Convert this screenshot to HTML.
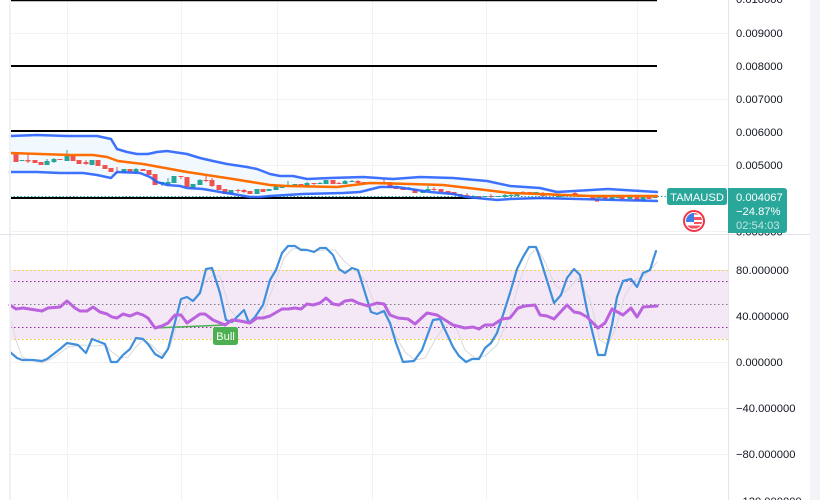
<!DOCTYPE html>
<html><head><meta charset="utf-8"><style>
html,body{margin:0;padding:0;background:#fff;width:820px;height:500px;overflow:hidden}
svg{display:block}
text{font-family:"Liberation Sans",sans-serif;font-size:11.2px;fill:#131722}
</style></head><body>
<svg width="820" height="500" viewBox="0 0 820 500" xmlns="http://www.w3.org/2000/svg">
<rect width="820" height="500" fill="#fff"/>
<!-- grid -->
<g stroke="#f1f2f6" stroke-width="1" fill="none">
<path d="M10 33.5H728M10 99.5H728M10 165.5H728M10 316.5H728M10 362.5H728M10 408.5H728M10 454.5H728"/>
<path d="M67.5 0V500M181.5 0V500M277.5 0V500M372.5 0V500M486.5 0V500M637.5 0V500"/>
</g>
<!-- RSI bands -->
<rect x="10" y="270" width="718" height="69" fill="#f3e5f5" fill-opacity=".9"/>
<g stroke="#f1e8f3" fill="none"><path d="M10 316.5H728"/></g>
<g fill="none" stroke-width="1" stroke-dasharray="1.5 2.5">
<path d="M10 270.5H728M10 339.5H728" stroke="#f0c419"/>
<path d="M10 281.5H728M10 327.5H728" stroke="#8e2a9e"/>
<path d="M10 304.5H728" stroke="#787b86"/>
</g>
<!-- black levels -->
<g stroke="#000" fill="none">
<path d="M10 0.5H657" stroke-width="1.5"/>
<path d="M10 66H657M10 131H657M10 198H657" stroke-width="2"/>
</g>
<!-- BB fill -->
<path fill="#f1f8fe" d="M10 136L37 135 67 136 97 136 111 139 117 149 127 152 137 154 148 154 157 152 167 151 187 154 200 158 213 161 227 164 247 167 257 169 270 174 280 176 293 176 307 179 330 178 363 177 393 179 420 177 453 178 487 181 510 186 540 188 557 192 608 189 657 192V201L540 198 510 199 497 200 467 197 453 194 430 192 397 187 380 187 360 192 343 193 303 194 270 196 260 197 250 197 233 194 220 192 203 189 187 188 180 186 167 185 157 182 150 177 140 173 117 172 111 178 97 175 83 173 60 173 37 172 10 172Z"/>
<!-- candles -->
<g fill="none" stroke-width="1" stroke="#ef5350">
<path d="M28 154V163M86 160V165M117 167V173M181 176V179M206 176V182M212 178V187M238 189V193M244 189V193M314 183V185M339 182V184M358 180V184M364 182V185M384 179V184M434 187V191M467 193V197M491 194V198M523 191V194M543 192V197M575 192V196M622 195V200"/>
</g>
<g fill="none" stroke-width="1" stroke="#26a69a">
<path d="M47 159V165M54 158V163M67 150V161M136 168V173M162 182V186M168 178V185M200 179V185M288 181V186M307 182V187M320 182V184M345 180V184M352 180V182M409 187V190M428 186V191M473 195V198M505 194V198M511 194V198"/>
</g>
<g fill="none" stroke-width="5" stroke="#ef5350">
<path d="M16 154V162M28 160V161.5M35 160V163M41 162V165M60 159V160M73 154V161M79 160V164M86 162V164M98 160V166M105 165V169M111 168V172M117 172V173M130 169V172M143 169V171M149 170V175M155 174V185M181 176V177M187 177V187M206 180V181M212 180V186M219 185V190M225 189V194M238 190V191M244 190V192M250 191V194M263 189V192M301 184V187M314 183V184M333 180V184M339 183V184M358 181V183M364 182V183M372 183V184M384 182V183M396 187V189M403 188V190M415 189V193M434 189V190M441 189V192M448 191V194M454 192V195M460 194V196M467 195V196M479 196V198M491 196V197M523 192V193M530 192V193M543 193V196M549 193V195M555 194V196M567 194V196M575 193V195M581 195V197M593 197V200M605 197V199M622 197V199M637 197V201M649 197V199"/>
<path d="M390 182V188" stroke-width="5"/>
</g>
<g fill="none" stroke-width="5" stroke="#26a69a">
<path d="M22 160V161M47 161V165M54 159V162M67 155V161M92 160V165M124 169V173M136 169V172M162 182V184M168 182V184M174 176V183M193 184V188M200 180V185M231 190V194M257 189V194M269 189V191M276 186V190M282 185V188M288 185V186M295 184V185M307 183V187M320 183V184M326 180V184M345 181V184M352 181V182M377 182V184M409 188V189M423 190V193M428 189V191M473 196V197M485 196V197M498 196V197M505 195V197M511 195V196M517 193V196M536 192V193M560 194V197M587 195V196M599 197V198M612 197V200M618 197V198M630 196V199M643 197V201M655 197V198"/>
</g>
<path d="M10 196.5H667" stroke="#26a69a" stroke-width="1" stroke-dasharray="1.5 2" fill="none"/>
<rect x="595" y="198.6" width="4" height="3" fill="#ef5350"/>
<!-- BB lines -->
<g fill="none" stroke-linejoin="round" stroke-linecap="round">
<path stroke="#2962ff" stroke-opacity=".9" stroke-width="2.5" d="M10 136L37 135 67 136 97 136 111 139 117 149 127 152 137 154 148 154 157 152 167 151 187 154 200 158 213 161 227 164 247 167 257 169 270 174 280 176 293 176 307 179 330 178 363 177 393 179 420 177 453 178 487 181 510 186 540 188 557 192 608 189 657 192"/>
<path stroke="#2962ff" stroke-opacity=".9" stroke-width="2.5" d="M10 172L37 172 60 173 83 173 97 175 111 178 117 172 140 173 150 177 157 182 167 185 180 186 187 188 203 189 220 192 233 194 250 197 260 197 270 196 303 194 343 193 360 192 380 187 397 187 430 192 453 194 467 197 497 200 510 199 540 198 657 201"/>
<path stroke="#ff6d00" stroke-width="2.5" d="M10 153L40 154 70 155 93 155 107 157 118 161 143 164 187 172 233 179 270 185 287 186 337 187 370 183 410 184 443 185 477 189 510 193 540 194 590 196 657 196"/>
<!-- signal -->
<path stroke="#d9d9de" stroke-width="1" d="M10 317L16 340 22 357 30 360 42 363 53 358 60 353 68 347 83 345 95 346 105 345 112 352 120 358 128 357 135 348 143 340 150 344 162 355 170 347 177 325 187 305 195 298 205 282 212 276 220 276 230 310 240 320 250 320 262 318 268 300 276 280 284 258 292 249 300 248 315 251 325 250 335 250 345 262 355 270 365 280 375 305 385 315 395 335 405 352 415 360 425 358 435 340 445 325 455 325 465 350 475 358 485 356 497 345 510 315 520 280 530 255 537 248 545 262 555 285 565 292 572 285 578 278 590 300 600 340 608 345 615 330 625 295 635 280 645 275 652 268 657 262"/>
<!-- bull line -->
<path stroke="#4caf50" stroke-width="1.5" d="M155 328L225 325"/>
<!-- stoch/blue -->
<path stroke="#3f8fdc" stroke-width="2.2" d="M10 352L17 358 22 360 33 360 42 361 47 359 60 349 67 343 78 345 86 353 92 339 105 344 111 362 117 362 123 355 130 349 136 338 143 339 148 344 155 354 162 358 168 349 173 330 181 299 187 297 193 301 200 293 206 269 212 268 220 293 226 320 232 322 244 310 249 323 255 317 263 305 270 280 276 270 282 253 288 246 295 246 301 250 307 250 314 252 320 248 326 248 333 255 339 269 345 273 352 268 358 270 371 312 377 314 384 311 390 323 396 343 403 362 414 361 422 350 433 320 440 319 446 332 453 347 459 356 466 362 472 359 479 359 485 348 491 343 497 333 503 315 510 293 517 269 523 257 529 247 536 247 540 258 554 303 561 295 567 278 574 269 580 275 587 310 598 355 605 355 612 325 617 297 623 281 631 279 637 287 643 273 650 270 656 251"/>
<!-- RSI -->
<path stroke="#bb62de" stroke-width="3" d="M10 305L16 309 23 308 42 311 48 308 60 307 67 301 75 308 80 311 87 311 93 307 100 312 107 314 112 317 117 318 123 314 130 316 137 313 143 315 148 318 155 328 162 326 168 323 175 315 181 315 187 323 200 314 205 314 213 320 225 325 232 320 240 321 250 323 257 318 263 318 270 316 282 309 288 309 295 308 301 309 307 304 313 305 320 303 326 298 333 304 339 305 345 301 352 300 358 303 368 306 377 303 384 304 390 315 398 318 408 319 415 324 427 313 437 315 453 325 465 328 473 327 479 329 485 325 493 325 502 319 510 318 518 308 525 306 535 305 540 315 547 316 554 319 567 305 574 312 580 313 587 317 598 328 605 323 612 309 623 315 631 308 637 317 643 307 657 306"/>
</g>
<!-- Bull label -->
<rect x="213" y="327" width="25" height="18" rx="2.5" fill="#4caf50"/>
<text x="225.5" y="340" text-anchor="middle" style="fill:#fff">Bull</text>
<!-- chrome -->
<rect x="9" y="0" width="2" height="500" fill="#f0f1f7"/>
<rect x="810" y="0" width="10" height="500" fill="#f3f3f8"/>
<rect x="10" y="231" width="718" height="1" fill="#f1f2f6"/>
<rect x="0" y="234" width="810" height="1" fill="#e3e4ec"/>
<rect x="728" y="0" width="1" height="500" fill="#e3e4ec"/>
<!-- axis labels -->
<g>
<text x="736" y="3">0.010000</text>
<text x="736" y="37">0.009000</text>
<text x="736" y="70">0.008000</text>
<text x="736" y="103">0.007000</text>
<text x="736" y="136">0.006000</text>
<text x="736" y="169">0.005000</text>
<text x="736" y="235.5">0.003000</text>
<text x="736" y="274">80.000000</text>
<text x="736" y="320">40.000000</text>
<text x="736" y="366">0.000000</text>
<text x="736" y="412">−40.000000</text>
<text x="736" y="458">−80.000000</text>
<text x="736" y="505">−120.000000</text>
</g>
<!-- last labels -->
<rect x="667" y="188" width="60" height="17" rx="2.5" fill="#2aa79b"/>
<text x="697" y="201" text-anchor="middle" style="fill:#fff">TAMAUSD</text>
<path d="M728 188H784a3 3 0 0 1 3 3V230a3 3 0 0 1-3 3H728Z" fill="#2aa79b"/>
<text x="736" y="201" style="fill:#fff">0.004067</text>
<text x="736" y="215" style="fill:#fff">−24.87%</text>
<text x="736" y="229" style="fill:#fff;fill-opacity:.7">02:54:03</text>
<!-- flag -->
<clipPath id="c"><circle cx="694" cy="221" r="8"/></clipPath>
<g clip-path="url(#c)">
<rect x="684" y="211" width="20" height="20" fill="#fff"/>
<rect x="684" y="212" width="20" height="2.5" fill="#f7525f"/>
<rect x="694" y="217" width="10" height="3" fill="#f7525f"/>
<rect x="694" y="222" width="10" height="2" fill="#f7525f"/>
<rect x="684" y="225.5" width="20" height="3" fill="#f7525f"/>
<rect x="685" y="212" width="9" height="10" fill="#3d7fe8"/>
</g>
<circle cx="694" cy="221" r="10" fill="none" stroke="#f23645" stroke-width="2"/>
</svg>
</body></html>
